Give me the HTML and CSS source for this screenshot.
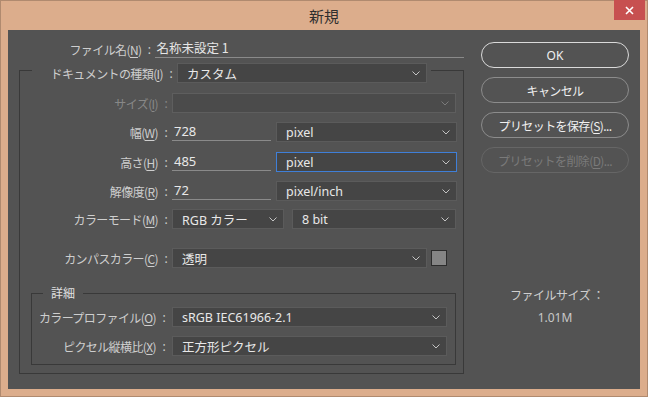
FILE: index.html
```html
<!DOCTYPE html>
<html lang="ja">
<head>
  <meta charset="UTF-8" />
  <title>新規</title>
  <link rel="stylesheet" href="styles.css">
</head>
<body>
  <div class="window">
    <div class="titlebar">
      <span></span>
      <span class="title">新規</span>
      <button class="close" type="button">
        <svg width="9" height="9" viewBox="0 0 9 9"><path d="M1 1 L8 8 M8 1 L1 8" stroke="#fff" stroke-width="1.6"/></svg>
      </button>
    </div>

    <div class="panel">
      <div class="left">
        <div class="file-row">
          <span class="lbl">ファイル名(<u>N</u>)</span>
          <span class="colon">:</span>
          <span class="file-name">名称未設定 1</span>
        </div>

        <fieldset class="group">
          <legend class="group-head">
            <span class="lbl">ドキュメントの種類(<u>I</u>)</span>
            <span class="colon">:</span>
            <span class="select w-doc">カスタム<svg class="chev" width="8" height="5" viewBox="0 0 8 5"><path d="M0.5 0.5 L4 4 L7.5 0.5" fill="none" stroke="#c4c4c4"/></svg></span>
          </legend>

          <div class="row r-size">
            <span class="lbl off">サイズ(<u>I</u>)</span>
            <span class="colon off">:</span>
            <span class="select off w-size"><svg class="chev" width="8" height="5" viewBox="0 0 8 5"><path d="M0.5 0.5 L4 4 L7.5 0.5" fill="none" stroke="#7a7a7a"/></svg></span>
          </div>

          <div class="row r-w">
            <span class="lbl">幅(<u>W</u>)</span>
            <span class="colon">:</span>
            <span class="field">728</span>
            <span class="select w-unit">pixel<svg class="chev" width="8" height="5" viewBox="0 0 8 5"><path d="M0.5 0.5 L4 4 L7.5 0.5" fill="none" stroke="#c4c4c4"/></svg></span>
          </div>

          <div class="row r-h">
            <span class="lbl">高さ(<u>H</u>)</span>
            <span class="colon">:</span>
            <span class="field">485</span>
            <span class="select focus w-unit">pixel<svg class="chev" width="8" height="5" viewBox="0 0 8 5"><path d="M0.5 0.5 L4 4 L7.5 0.5" fill="none" stroke="#c4c4c4"/></svg></span>
          </div>

          <div class="row r-res">
            <span class="lbl">解像度(<u>R</u>)</span>
            <span class="colon">:</span>
            <span class="field">72</span>
            <span class="select w-unit">pixel/inch<svg class="chev" width="8" height="5" viewBox="0 0 8 5"><path d="M0.5 0.5 L4 4 L7.5 0.5" fill="none" stroke="#c4c4c4"/></svg></span>
          </div>

          <div class="row r-mode">
            <span class="lbl">カラーモード(<u>M</u>)</span>
            <span class="colon">:</span>
            <span class="select w-mode">RGB カラー<svg class="chev" width="8" height="5" viewBox="0 0 8 5"><path d="M0.5 0.5 L4 4 L7.5 0.5" fill="none" stroke="#c4c4c4"/></svg></span>
            <span class="select w-bit">8 bit<svg class="chev" width="8" height="5" viewBox="0 0 8 5"><path d="M0.5 0.5 L4 4 L7.5 0.5" fill="none" stroke="#c4c4c4"/></svg></span>
          </div>

          <div class="row r-canvas">
            <span class="lbl">カンパスカラー(<u>C</u>)</span>
            <span class="colon">:</span>
            <span class="select w-canvas">透明<svg class="chev" width="8" height="5" viewBox="0 0 8 5"><path d="M0.5 0.5 L4 4 L7.5 0.5" fill="none" stroke="#c4c4c4"/></svg></span>
            <span class="swatch"></span>
          </div>

          <fieldset class="sub">
            <legend class="sub-head">詳細</legend>
            <div class="row r-prof">
              <span class="lbl">カラープロファイル(<u>O</u>)</span>
              <span class="colon">:</span>
              <span class="select w-adv">sRGB IEC61966-2.1<svg class="chev" width="8" height="5" viewBox="0 0 8 5"><path d="M0.5 0.5 L4 4 L7.5 0.5" fill="none" stroke="#c4c4c4"/></svg></span>
            </div>
            <div class="row r-aspect">
              <span class="lbl">ピクセル縦横比(<u>X</u>)</span>
              <span class="colon">:</span>
              <span class="select w-adv">正方形ピクセル<svg class="chev" width="8" height="5" viewBox="0 0 8 5"><path d="M0.5 0.5 L4 4 L7.5 0.5" fill="none" stroke="#c4c4c4"/></svg></span>
            </div>
          </fieldset>
        </fieldset>
      </div>

      <div class="right">
        <button class="btn default" type="button">OK</button>
        <button class="btn" type="button">キャンセル</button>
        <button class="btn" type="button">プリセットを保存(<u>S</u>)...</button>
        <button class="btn disabled" type="button">プリセットを削除(<u>D</u>)...</button>
        <div class="filesize">
          <div class="fs-label">ファイルサイズ ：</div>
          <div class="fs-value">1.01M</div>
        </div>
      </div>
    </div>
  </div>
</body>
</html>
```

FILE: styles.css
```css
* { box-sizing: border-box; }
body { margin: 0; background: #dcad8c; font-family: "Noto Sans", "Noto Sans CJK JP", sans-serif; }
u { text-underline-offset: 2px; }

.window {
  width: 648px;
  height: 397px;
  background: #dcad8c;
  border: 1px solid #b08a6f;
  display: flex;
  flex-direction: column;
}
.titlebar {
  height: 29px;
  display: grid;
  grid-template-columns: 1fr auto 1fr;
}
.title {
  font-family: "Noto Sans CJK JP", sans-serif;
  font-size: 15px;
  color: #2e2e2e;
  line-height: 30px;
}
.close {
  justify-self: end;
  align-self: start;
  width: 31px;
  height: 20px;
  margin-right: 2px;
  margin-top: -1px;
  padding: 0;
  border: none;
  background: #c75050;
  display: flex;
  align-items: center;
  justify-content: center;
}

.panel {
  margin: 0 7px 7px;
  flex: 1;
  background: #535353;
  display: flex;
  padding: 10px 0 0 11px;
  color: #cecece;
  font-size: 12px;
}
.left { width: 445px; }

.lbl {
  font-family: "Noto Sans CJK JP", sans-serif;
  text-align: right;
  letter-spacing: -0.6px;
  white-space: nowrap;
  padding-right: 2px;
}
.colon { width: 10px; text-align: center; }
.off { color: #888; }

.file-row { display: flex; align-items: center; height: 18px; }
.file-row .lbl { width: 125px; }
.file-row .colon { width: 12px; }
.file-name {
  width: 310px;
  height: 18px;
  line-height: 16px;
  padding-left: 1px;
  border-bottom: 1px solid #8a8a8a;
  color: #e6e6e6;
  font-family: "Noto Sans CJK JP", sans-serif;
  font-size: 12.5px;
}

.group {
  margin: 0;
  padding: 0 0 8px;
  border: 1px solid #393939;
  min-width: 0;
}
.group-head {
  margin-left: 12px;
  padding: 5px 4px 0 0;
  display: flex;
  align-items: center;
}
.group-head .lbl { width: 133px; }
.group-head .colon { width: 12px; }

.row { display: flex; align-items: center; height: 20px; }
.row .lbl { width: 140px; }
.row .colon { width: 12px; }
.r-size { margin-top: 10px; }
.r-w { margin-top: 9px; }
.r-h { margin-top: 10px; }
.r-res { margin-top: 9px; }
.r-mode { margin-top: 8px; }
.r-canvas { margin-top: 19px; }

.select {
  height: 20px;
  background: #454545;
  border: 1px solid #5b5b5b;
  display: flex;
  align-items: center;
  justify-content: space-between;
  padding: 0 6px 0 9px;
  color: #e8e8e8;
  font-size: 12.5px;
  white-space: nowrap;
}
.select.off { background: #4b4b4b; border-color: #5e5e5e; justify-content: flex-end; }
.select.focus { border-color: #3f7fd8; }
.chev { flex: none; }

.w-doc { width: 250px; }
.w-size { width: 284px; }
.w-unit { width: 181px; margin-left: 5px; }
.w-mode { width: 112px; }
.w-bit { width: 164px; margin-left: 8px; }
.w-canvas { width: 255px; }
.w-adv { width: 275px; }

.field {
  width: 99px;
  height: 19px;
  align-self: flex-start;
  border-bottom: 1px solid #8a8a8a;
  padding-left: 2px;
  line-height: 18px;
  color: #e8e8e8;
  font-size: 13px;
}

.swatch {
  width: 16px;
  height: 16px;
  margin-left: 4px;
  background: #858585;
  border: 1px solid #2c2c2c;
}

.sub {
  margin: 17px 7px 0 11px;
  padding: 0 0 8px;
  border: 1px solid #393939;
  min-width: 0;
}
.sub-head {
  margin-left: 11px;
  padding: 0 8px;
  font-family: "Noto Sans CJK JP", sans-serif;
  line-height: 16px;
  color: #e0e0e0;
}
.sub .row .lbl { width: 126px; }
.sub .colon { margin-right: 2px; }
.r-prof { margin-top: 6px; }
.r-aspect { margin-top: 9px; }

.right {
  margin-left: 17px;
  width: 148px;
  display: flex;
  flex-direction: column;
}
.btn {
  height: 26px;
  margin-top: 2px;
  margin-bottom: 7px;
  border-radius: 13px;
  border: 1px solid #8c8c8c;
  background: #535353;
  color: #f0f0f0;
  font-family: "Noto Sans CJK JP", sans-serif;
  font-size: 12px;
  letter-spacing: -0.6px;
  padding: 0;
}
.btn.default { border-color: #dadada; font-family: "Noto Sans", sans-serif; letter-spacing: 0; }
.btn.disabled { border-color: #666; color: #7a7a7a; }

.filesize {
  margin-top: 107px;
  text-align: center;
  font-family: "Noto Sans CJK JP", sans-serif;
  font-size: 12px;
  line-height: 16px;
}
.fs-label { color: #cfcfcf; letter-spacing: -0.5px; padding-left: 4px; }
.fs-value { margin-top: 7px; color: #c8c8c8; font-family: "Noto Sans", sans-serif; }
```
